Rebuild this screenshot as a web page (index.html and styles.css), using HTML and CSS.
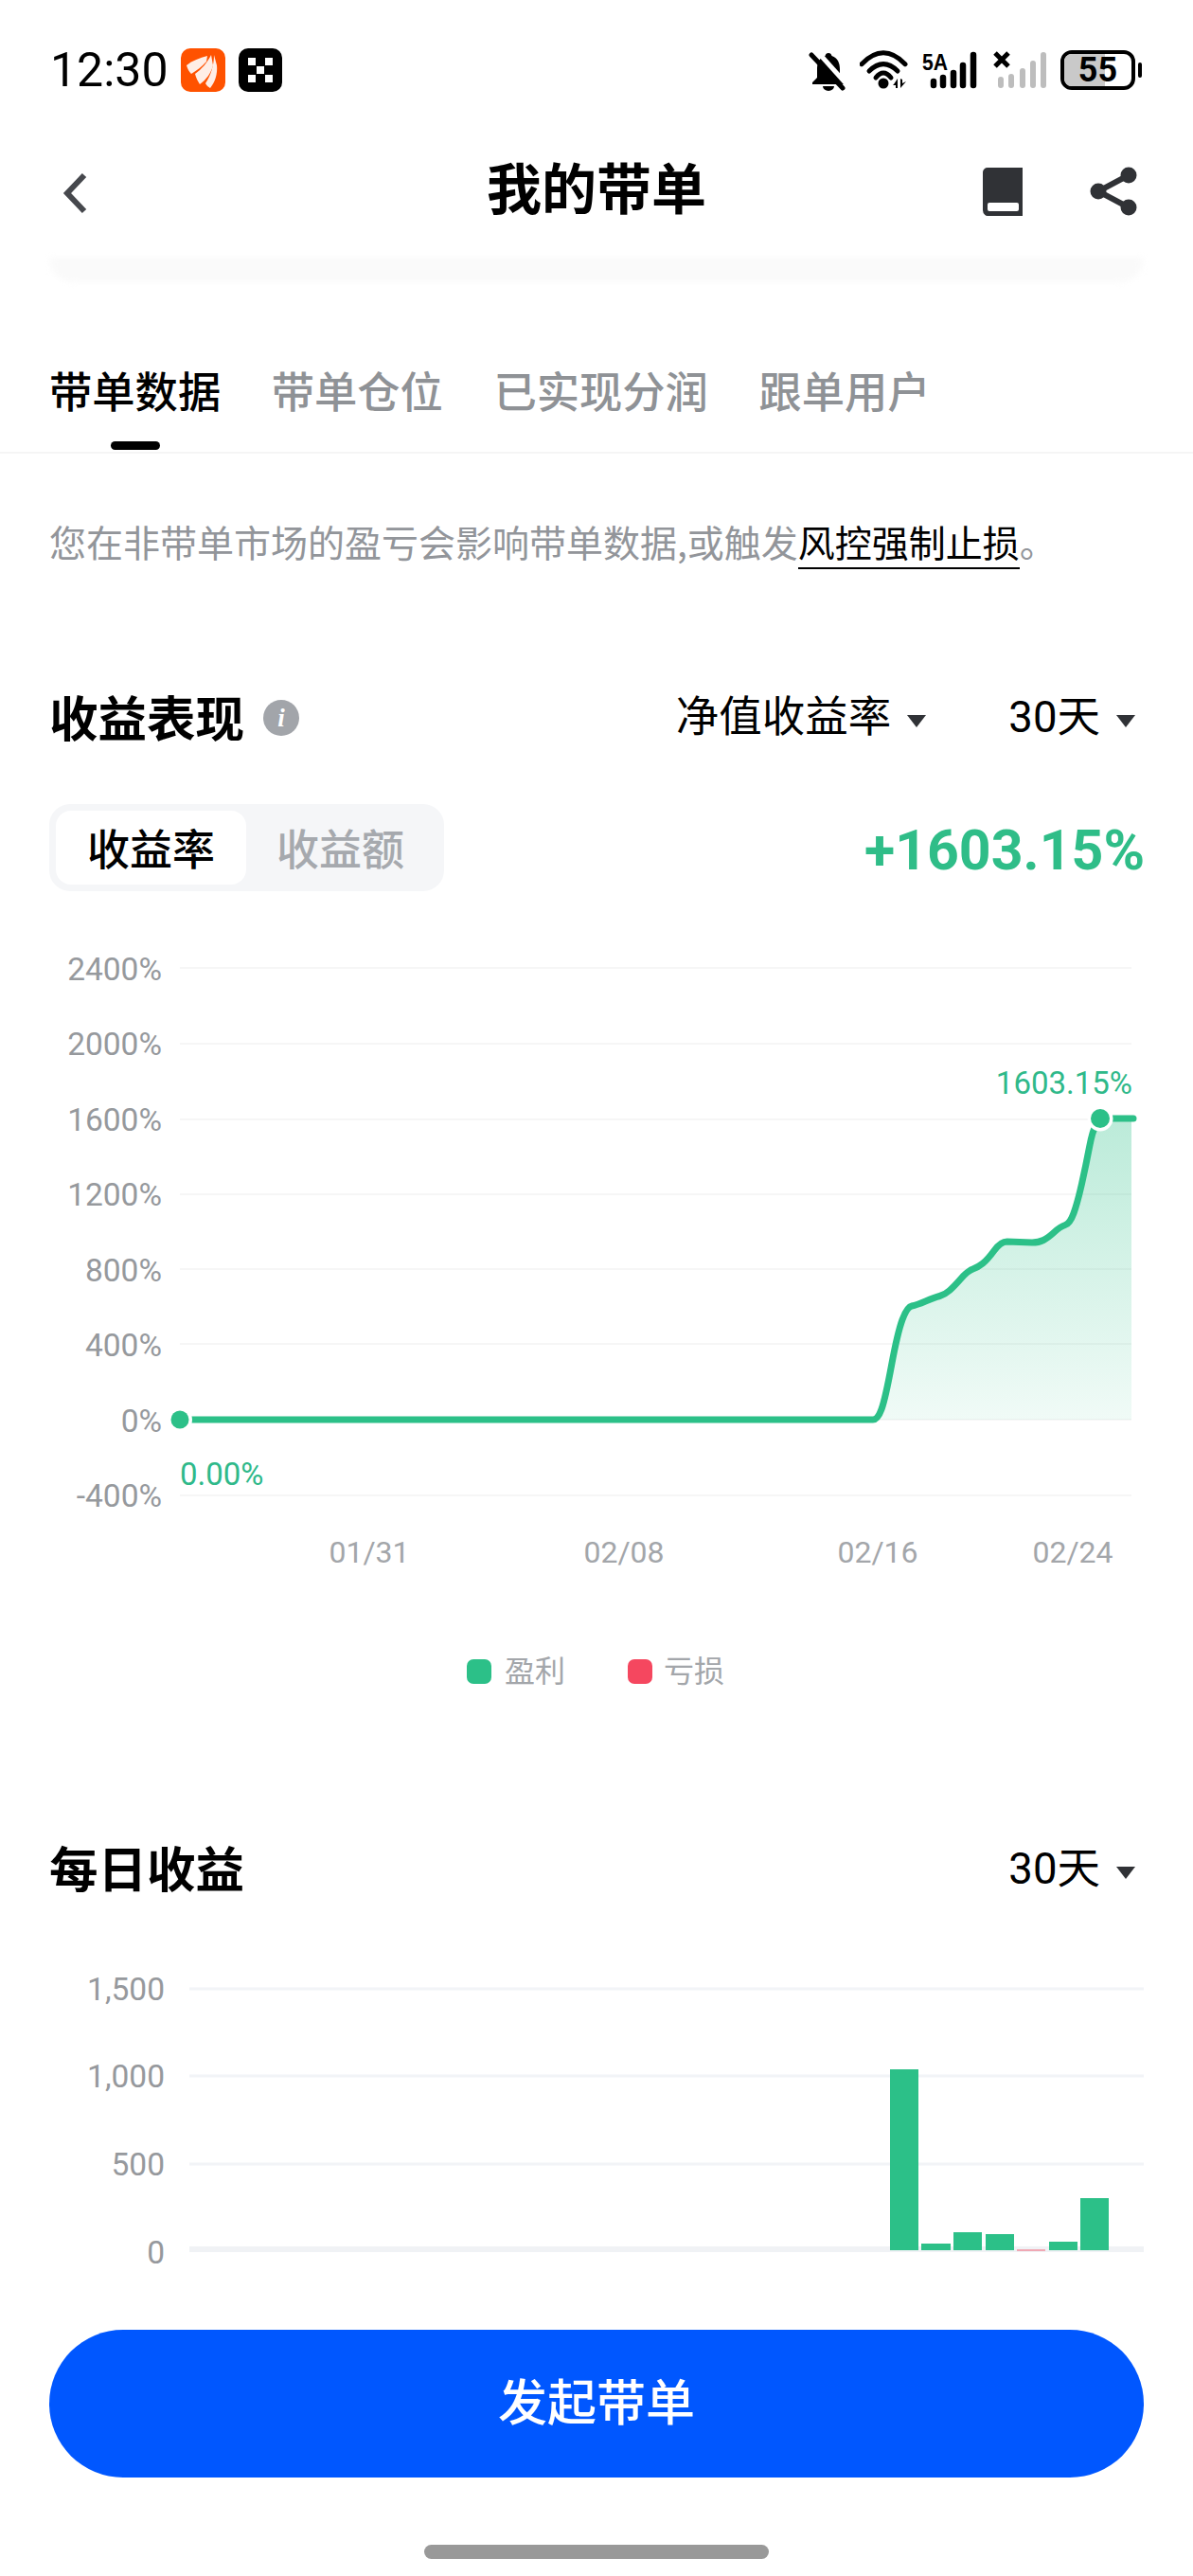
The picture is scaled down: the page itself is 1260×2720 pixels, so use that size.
FILE: index.html
```html
<!DOCTYPE html>
<html lang="zh">
<head>
<meta charset="utf-8">
<title>我的带单</title>
<link rel="stylesheet" href="styles.css">
</head>
<body>
<div class="page">
  <main class="main">
    <div class="statusbar">
      <span class="time">12:30</span>
      <svg class="app-icon app-first" viewBox="0 0 47 46"><rect width="47" height="46" rx="10" fill="#ff5200"/><path d="M28 8C20 10 12 13 6 18c1 4 3 7 5 9 6-4 12-8 16-13z" fill="#fff" opacity=".9"/><path d="M32 7c-4 8-10 15-17 20 1 4 3 8 5 11 7-5 12-12 14-20z" fill="#fff" opacity=".9"/><path d="M35 7c0 10-3 21-9 30 1 2 3 4 5 5 5-6 8-15 7-24z" fill="#fff" opacity=".9"/></svg>
      <svg class="app-icon" viewBox="0 0 46 46"><rect width="46" height="46" rx="10" fill="#000"/><path d="M10 10h8v8h-8zM28 10h8v8h-8zM19 19h8v8h-8zM10 28h8v8h-8zM28 28h8v8h-8z" fill="#fff"/></svg>
      <div class="status-icons">
        <svg class="si-bell" viewBox="0 0 40 44"><path d="M21 4c-2 0-3 1-3.500 3C11 9 9 15 9 21v9l-5 5v2h34v-2l-5-5v-9c0-6-2-12-8.500-14C24 5 23 4 21 4z" fill="#000"/><path d="M15 39a6 5 0 0 0 12 0z" fill="#000"/><path d="M8 1l34 38" stroke="#fff" stroke-width="5"/><path d="M3 6l33 35" stroke="#000" stroke-width="5" stroke-linecap="round"/></svg>
        <svg class="si-wifi" viewBox="0 0 52 44"><path d="M2 15.700Q25 -8 48 15.700" fill="none" stroke="#000" stroke-width="5" stroke-linecap="round"/><path d="M10 23Q25 8 40 23" fill="none" stroke="#000" stroke-width="5" stroke-linecap="round"/><path d="M17 30Q25 20 33 30" fill="none" stroke="#000" stroke-width="5" stroke-linecap="round"/><circle cx="25" cy="36" r="5.500" fill="#000"/><path d="M36 37l4-6v10h-2v-3h-3zM43 31l2 1v4l4-2-6 7z" fill="#000"/></svg>
        <svg class="si-signal" viewBox="0 0 60 44"><text class="si-5a" x="0" y="22" textLength="27" lengthAdjust="spacingAndGlyphs">5A</text><g stroke="#000" stroke-width="6.500" stroke-linecap="round"><path d="M12 38v-4M22 38v-8M33 38V25M43 38V17M54 38V6"/></g></svg>
        <svg class="si-signal-x" viewBox="0 0 58 44"><path d="M3 4l14 14M17 4L3 18" stroke="#000" stroke-width="5"/><g stroke="#bdbdbd" stroke-width="6" stroke-linecap="round"><path d="M9 38v-6M20 38v-9M32 38V23M43 38V15M54 38V6"/></g></svg>
        <div class="battery">
          <div class="battery-body"><span class="battery-fill"></span><span class="battery-num">55</span></div>
          <span class="battery-tip"></span>
        </div>
      </div>
    </div>

    <header class="nav">
      <svg class="nav-back" viewBox="0 0 28 46"><path d="M24 4L6 23l18 19" fill="none" stroke="#46484d" stroke-width="6"/></svg>
      <h1 class="nav-title">我的带单</h1>
      <svg class="nav-book" viewBox="0 0 44 52"><path d="M6 1h37v51H8a6 6 0 0 1-7-6V6a5 5 0 0 1 5-5z" fill="#303236"/><rect x="6" y="38" width="33" height="9" rx="2" fill="#fff"/></svg>
      <svg class="nav-share" viewBox="0 0 52 52"><path d="M42 9L10 26l32 17" fill="none" stroke="#303236" stroke-width="6"/><circle cx="42" cy="9" r="8.500" fill="#303236"/><circle cx="10" cy="26" r="8.500" fill="#303236"/><circle cx="42" cy="43" r="8.500" fill="#303236"/></svg>
    </header>

    <div class="strip"></div>

    <nav class="tabs">
      <div class="tab tab-active">带单数据<span class="tab-bar"></span></div>
      <div class="tab">带单仓位</div>
      <div class="tab">已实现分润</div>
      <div class="tab">跟单用户</div>
    </nav>

    <p class="note">您在非带单市场的盈亏会影响带单数据,或触发<span class="note-link">风控强制止损</span>。</p>

    <section class="head head-perf">
      <h2 class="head-title">收益表现</h2>
      <span class="info">i</span>
      <div class="select select-metric">净值收益率<span class="caret"></span></div>
      <div class="select">30天<span class="caret"></span></div>
    </section>

    <div class="summary">
      <div class="toggle">
        <div class="toggle-item toggle-on">收益率</div>
        <div class="toggle-item">收益额</div>
      </div>
      <div class="total">+1603.15%</div>
    </div>

    <svg class="chart-line" viewBox="0 1000 1260 800">
      <defs>
        <linearGradient id="area" x1="0" y1="0" x2="0" y2="1">
          <stop offset="0" stop-color="#2cc088" stop-opacity=".32"/>
          <stop offset="1" stop-color="#2cc088" stop-opacity=".07"/>
        </linearGradient>
      </defs>
      <g class="grid">
        <path d="M190 1022H1195M190 1102H1195M190 1182H1195M190 1261H1195M190 1340H1195M190 1419H1195M190 1499H1195M190 1579H1195"/>
      </g>
      <g class="ax-y">
        <text x="171" y="1035">2400%</text>
        <text x="171" y="1114">2000%</text>
        <text x="171" y="1194">1600%</text>
        <text x="171" y="1273">1200%</text>
        <text x="171" y="1353">800%</text>
        <text x="171" y="1432">400%</text>
        <text x="171" y="1512">0%</text>
        <text x="171" y="1591">-400%</text>
      </g>
      <path fill="url(#area)" d="M927 1499Q931 1488 935 1477T941.500 1442Q948 1407 953 1393.500Q958 1380 963 1379Q968 1378 977.500 1374Q987 1370 992.500 1368.500Q998 1367 1003 1362.500Q1008 1358 1015 1350Q1022 1342 1027.500 1340Q1033 1338 1038 1334Q1043 1330 1050 1320.500Q1057 1311 1063.500 1311L1090 1312Q1097 1312 1102 1309.500Q1107 1307 1113.500 1301Q1120 1295 1125 1293.500Q1130 1292 1134 1281Q1138 1270 1142.500 1250Q1147 1230 1150.500 1211.500Q1154 1193 1158 1187L1162 1181H1195V1499Z"/>
      <path class="curve" d="M190 1499H922Q927 1499 931 1488Q935 1477 941.500 1442Q948 1407 953 1393.500Q958 1380 963 1379Q968 1378 977.500 1374Q987 1370 992.500 1368.500Q998 1367 1003 1362.500Q1008 1358 1015 1350Q1022 1342 1027.500 1340Q1033 1338 1038 1334Q1043 1330 1050 1320.500Q1057 1311 1063.500 1311L1090 1312Q1097 1312 1102 1309.500Q1107 1307 1113.500 1301Q1120 1295 1125 1293.500Q1130 1292 1134 1281Q1138 1270 1142.500 1250Q1147 1230 1150.500 1211.500Q1154 1193 1158 1187L1162 1181H1197"/>
      <circle cx="190" cy="1499" r="13" fill="#fff"/>
      <circle class="dot" cx="190" cy="1499" r="9.500"/>
      <circle cx="1162" cy="1181" r="13.500" fill="#fff"/>
      <circle class="dot" cx="1162" cy="1181" r="10"/>
      <text class="val" x="190" y="1568">0.00%</text>
      <text class="val val-end" x="1196" y="1155">1603.15%</text>
      <g class="ax-x">
        <text x="390" y="1650">01/31</text>
        <text x="659" y="1650">02/08</text>
        <text x="927" y="1650">02/16</text>
        <text x="1133" y="1650">02/24</text>
      </g>
      <rect x="493" y="1752" width="26" height="26" rx="7" class="lg-green"/>
      <text class="lg-text" x="533" y="1776">盈利</text>
      <rect x="663" y="1752" width="26" height="26" rx="7" class="lg-red"/>
      <text class="lg-text" x="701" y="1776">亏损</text>
    </svg>

    <section class="head head-daily">
      <h2 class="head-title">每日收益</h2>
      <div class="select select-push">30天<span class="caret"></span></div>
    </section>

    <svg class="chart-bar" viewBox="0 2060 1260 340">
      <path class="bar-grid" d="M200 2100H1208M200 2192H1208M200 2285H1208"/>
      <path class="bar-base" d="M200 2375H1208"/>
      <g class="ax-y2">
        <text x="174" y="2112">1,500</text>
        <text x="174" y="2204">1,000</text>
        <text x="174" y="2297">500</text>
        <text x="174" y="2390">0</text>
      </g>
      <g class="bars">
        <rect x="940" y="2185" width="30" height="191"/>
        <rect x="973" y="2369" width="31" height="7"/>
        <rect x="1007" y="2357" width="30" height="19"/>
        <rect x="1041" y="2359" width="30" height="17"/>
        <rect x="1108" y="2367" width="30" height="9"/>
        <rect x="1141" y="2321" width="30" height="55"/>
      </g>
      <rect x="1074" y="2375" width="30" height="2" class="bar-neg"/>
    </svg>
  </main>

  <footer class="footer">
    <button class="cta">发起带单</button>
    <div class="home"></div>
  </footer>
</div>
</body>
</html>
```

FILE: styles.css
```css
* { box-sizing: border-box; }
html, body { margin: 0; padding: 0; background: #fff; }
body { font-family: Roboto, "Noto Sans CJK SC", sans-serif; color: #000; }
svg { display: block; flex: none; }
.page { width: 1260px; height: 2720px; display: flex; flex-direction: column; overflow: hidden; }
.main { flex: 1; min-height: 0; overflow: hidden; }

.statusbar { height: 146px; display: flex; align-items: center; padding: 2px 54px 0 53px; }
.time { font-size: 50px; line-height: 60px; width: 138px; }
.app-icon { width: 46px; height: 46px; margin-right: 14px; }
.app-first { width: 47px; }
.status-icons { margin-left: auto; display: flex; align-items: center; gap: 14px; }
.si-bell { width: 40px; height: 44px; }
.si-wifi { width: 52px; height: 44px; }
.si-signal { width: 60px; height: 44px; }
.si-signal-x { width: 58px; height: 44px; }
.si-5a { font: 700 24px "Liberation Sans", sans-serif; fill: #000; }
.battery { display: flex; align-items: center; gap: 3px; }
.battery-body { width: 79px; height: 42px; border: 4px solid #000; border-radius: 12px; position: relative; overflow: hidden; display: flex; align-items: center; justify-content: center; }
.battery-fill { position: absolute; left: 0; top: 0; bottom: 0; width: 60%; background: #c9c9c9; }
.battery-num { position: relative; font-size: 36px; font-weight: 700; line-height: 34px; }
.battery-tip { width: 4px; height: 16px; background: #000; border-radius: 2px; }

.nav { height: 108px; display: flex; align-items: center; padding: 0 58px 0 65px; position: relative; }
.nav-back { width: 28px; height: 46px; margin-top: 8px; }
.nav-title { margin: -8px 0 0; position: absolute; left: 0; right: 0; text-align: center; font-family: "Noto Sans CJK SC", sans-serif; font-size: 58px; font-weight: 700; line-height: 80px; }
.nav-book { width: 44px; height: 52px; margin-left: auto; margin-right: 69px; margin-top: 4px; }
.nav-share { width: 52px; height: 52px; margin-top: 4px; }

.strip { height: 26px; margin: 18px 52px 0; background: #fafafa; border-radius: 0 0 30px 30px; filter: blur(3px); }

.tabs { display: flex; gap: 53.500px; padding: 83px 52px 0; height: 181px; border-bottom: 2px solid #f5f5f5; }
.tab { position: relative; font-family: "Noto Sans CJK SC", sans-serif; font-size: 45.300px; font-weight: 500; line-height: 60px; color: #8f9296; height: 60px; }
.tab-active { color: #000; }
.tab-bar { position: absolute; left: 65px; top: 85px; width: 52px; height: 9px; border-radius: 5px; background: #000; }

.note { margin: 62px 52px 0; font-family: "Noto Sans CJK SC", sans-serif; font-size: 39px; line-height: 60px; color: #92959a; white-space: nowrap; }
.note-link { color: #000; border-bottom: 2px solid #000; }

.head { height: 60px; display: flex; align-items: center; padding: 0 61px 0 52px; }
.head-perf { margin-top: 127px; }
.head-daily { margin-top: 143px; }
.head-title { margin: -5px 0 0; font-family: "Noto Sans CJK SC", sans-serif; font-size: 51.500px; font-weight: 700; line-height: 60px; }
.info { width: 38px; height: 38px; border-radius: 50%; background: #a2a5aa; color: #fff; margin-left: 20px; display: flex; align-items: center; justify-content: center; font: italic 700 27px "Liberation Serif", serif; }
.select { display: flex; align-items: center; font-family: Roboto, "Noto Sans CJK SC", sans-serif; font-size: 45.500px; line-height: 60px; }
.select-metric { margin-left: auto; margin-right: 87px; }
.select-push { margin-left: auto; margin-top: 2px; }
.caret { width: 0; height: 0; border-left: 10.500px solid transparent; border-right: 10.500px solid transparent; border-top: 13px solid #303236; margin-left: 17px; margin-top: 6px; }

.summary { margin-top: 61px; padding: 0 51px 0 52px; display: flex; align-items: center; justify-content: space-between; }
.toggle { width: 417px; height: 92px; background: #f5f6f8; border-radius: 22px; padding: 7px; display: flex; }
.toggle-item { font-family: "Noto Sans CJK SC", sans-serif; font-size: 45px; font-weight: 500; line-height: 78px; text-align: center; color: #a6a9ae; width: 201px; }
.toggle-on { background: #fff; color: #000; border-radius: 16px; margin-right: -1px; }
.total { font-family: Roboto, sans-serif; font-weight: 700; font-size: 59px; line-height: 70px; color: #2fbd88; margin-top: 5px; }

.chart-line { width: 1260px; height: 800px; margin-top: 59px; }
.grid path { stroke: #f6f6f6; stroke-width: 2; fill: none; }
.ax-y text, .ax-y2 text { font: 400 33.500px Roboto, sans-serif; fill: #96999d; text-anchor: end; }
.ax-x text { font: 400 32px Roboto, sans-serif; fill: #a3a6aa; text-anchor: middle; }
.curve { fill: none; stroke: #2cc088; stroke-width: 7; stroke-linecap: round; stroke-linejoin: round; }
.dot { fill: #2cc088; }
.val { font: 400 33px Roboto, sans-serif; fill: #2fb98a; }
.val-end { text-anchor: end; }
.lg-green { fill: #2cc088; }
.lg-red { fill: #f5475f; }
.lg-text { font: 400 32px "Noto Sans CJK SC", sans-serif; fill: #a3a6aa; }

.chart-bar { width: 1260px; height: 340px; margin-top: 57px; }
.bar-grid { stroke: #f2f4f7; stroke-width: 3; fill: none; }
.bar-base { stroke: #f0f2f5; stroke-width: 6; fill: none; }
.bars rect { fill: #2cc088; }
.bar-neg { fill: #f0a8b4; }

.footer { height: 260px; padding: 0 52px; flex: none; display: flex; flex-direction: column; align-items: center; background: #fff; }
.cta { width: 1156px; height: 156px; border: 0; border-radius: 78px; background: #0057ff; color: #fff; font-family: "Noto Sans CJK SC", sans-serif; font-size: 52px; font-weight: 500; padding: 0 0 10px; }
.home { width: 364px; height: 15px; border-radius: 8px; background: #999; margin-top: 71px; }
```
